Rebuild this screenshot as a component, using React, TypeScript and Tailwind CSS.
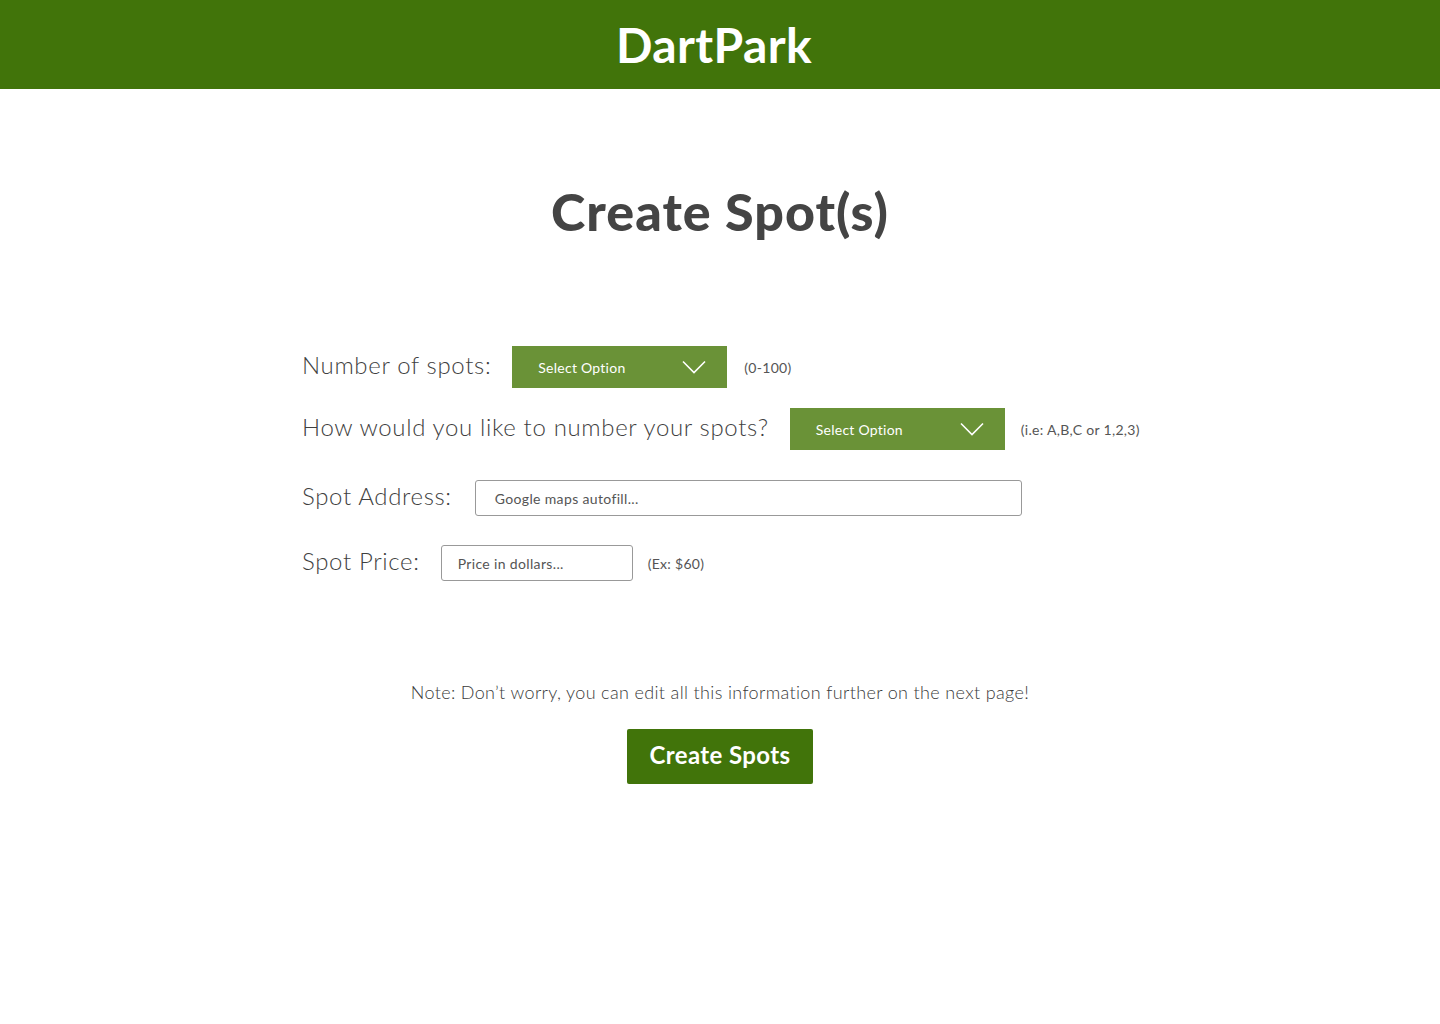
import React from 'react';

const font = { fontFamily: 'Lato, "Open Sans", sans-serif' };

function Chevron() {
    return (
        <svg width="24" height="14" viewBox="0 0 24 14" fill="none" className="flex-shrink-0">
            <path d="M1 1.5 L12 12.5 L23 1.5" stroke="white" strokeWidth="1.6" />
        </svg>
    );
}

function SelectBox() {
    return (
        <div className="flex items-center justify-between w-[215px] h-[42px] bg-[#6a9237] pl-[26px] pr-[21px] text-white text-[14px] tracking-[0.25px]">
            <span>Select Option</span>
            <Chevron />
        </div>
    );
}

function Hint({ children }: { children: React.ReactNode }) {
    return <span className="text-[14px] text-[#555] tracking-[0.3px]">{children}</span>;
}

function Label({ children }: { children: React.ReactNode }) {
    return (
        <span className="text-[24px] font-light text-[#3f3f3f] tracking-[0.65px] -mt-[5px]">{children}</span>
    );
}

export default function App() {
    return (
        <div className="min-h-[1024px] bg-white" style={font}>
            <header className="h-[89px] bg-[#41740a] flex items-center justify-center">
                <h1 className="text-[48px] font-bold text-white leading-none tracking-[0.4px] ml-[-12px]">DartPark</h1>
            </header>

            <main className="flex flex-col">
                <h2 className="mt-[90px] text-center text-[52px] font-black text-[#444] leading-[64px] tracking-[1px]">
                    Create Spot(s)
                </h2>

                <div className="mt-[103px] pl-[302px] flex flex-col">
                    <div className="flex items-center h-[42px]">
                        <Label>Number of spots:</Label>
                        <div className="ml-[21px] flex items-center gap-[17px]">
                            <SelectBox />
                            <Hint>(0-100)</Hint>
                        </div>
                    </div>
                    <div className="flex items-center h-[42px] mt-[20px]">
                        <Label>How would you like to number your spots?</Label>
                        <div className="ml-[21px] flex items-center gap-[16px]">
                            <SelectBox />
                            <Hint>(i.e: A,B,C or 1,2,3)</Hint>
                        </div>
                    </div>
                    <div className="flex items-center h-[36px] mt-[30px]">
                        <Label>Spot Address:</Label>
                        <div className="ml-[23px] w-[547px] h-[36px] border border-[#999] rounded-[3px] flex items-center pl-[19px] text-[14px] text-[#555] tracking-[0.35px]">
                            Google maps autofill...
                        </div>
                    </div>
                    <div className="flex items-center h-[36px] mt-[29px]">
                        <Label>Spot Price:</Label>
                        <div className="ml-[21px] flex items-center gap-[15px]">
                            <div className="w-[192px] h-[36px] border border-[#999] rounded-[3px] flex items-center pl-[16px] text-[14px] text-[#555] tracking-[0.35px]">
                                Price in dollars...
                            </div>
                            <Hint>(Ex: $60)</Hint>
                        </div>
                    </div>
                </div>

                <p className="mt-[99px] text-center text-[18px] font-light text-[#3a3a3a] leading-[24px] tracking-[0.35px]">
                    Note: Don’t worry, you can edit all this information further on the next page!
                </p>
                <div className="mt-[25px] flex justify-center">
                    <button className="w-[186px] h-[55px] bg-[#41740a] rounded-[2px] text-white text-[24px] font-bold tracking-[0.4px] pb-[4px]">
                        Create Spots
                    </button>
                </div>
            </main>
        </div>
    );
}
